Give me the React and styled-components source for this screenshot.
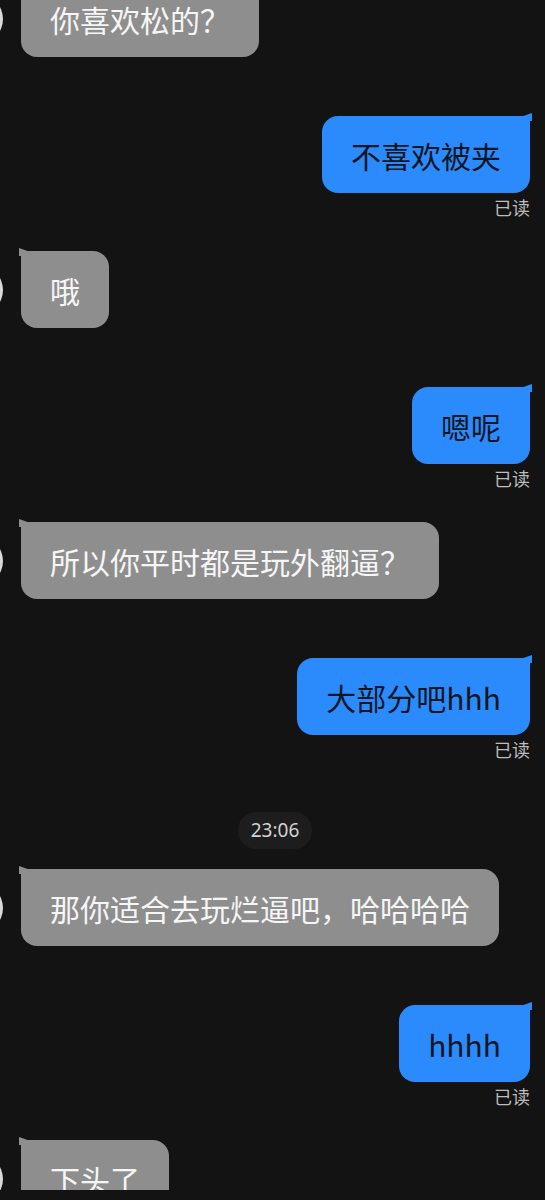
import styled, { createGlobalStyle } from 'styled-components'

const GlobalStyle = createGlobalStyle`
  html, body {
    margin: 0;
    padding: 0;
    background: #131313;
  }
  body {
    font-family: "Noto Sans CJK SC", "Noto Sans", sans-serif;
  }
`

const messages = [
  { from: 'them', text: '你喜欢松的？' },
  { from: 'me', text: '不喜欢被夹', read: true },
  { from: 'them', text: '哦' },
  { from: 'me', text: '嗯呢', read: true },
  { from: 'them', text: '所以你平时都是玩外翻逼？' },
  { from: 'me', text: '大部分吧hhh', read: true },
  { time: '23:06' },
  { from: 'them', text: '那你适合去玩烂逼吧，哈哈哈哈' },
  { from: 'me', text: 'hhhh', read: true },
  { from: 'them', text: '下头了' }
]

const Screen = styled.div`
  width: 545px;
  height: 1200px;
  background: #131313;
  overflow: hidden;
`

const Viewport = styled.div`
  height: 1190px;
  overflow: hidden;
`

const Thread = styled.div`
  display: flex;
  flex-direction: column;
  margin-top: -20px;
  padding: 0 15px 0 0;
`

const Stamp = styled.div`
  align-self: center;
  margin: 52px 0 0 20px;
  height: 37px;
  padding: 0 13px;
  border-radius: 18px;
  background: #1d1d1d;
  color: #d2d2d2;
  font-family: "Noto Sans", "Liberation Sans", sans-serif;
  font-size: 19px;
  line-height: 37px;
`

const Incoming = styled.div`
  display: flex;
  align-items: center;
  gap: 18px;
  margin-top: 33px;

  &:first-child {
    margin-top: 0;
  }

  ${Stamp} + & {
    margin-top: 20px;
  }
`

const Outgoing = styled.div`
  display: flex;
  flex-direction: column;
  align-items: flex-end;
  margin-top: 59px;
`

const Avatar = styled.div`
  width: 50px;
  height: 50px;
  margin-left: -47px;
  flex-shrink: 0;
  border-radius: 50%;
  background: #dadada;
`

const Bubble = styled.div`
  position: relative;
  padding: 20px 29px 18px;
  font-size: 30px;
  line-height: 39px;
  white-space: nowrap;
  background: ${p => (p.$mine ? '#2b8bfd' : '#8e8e8e')};
  color: ${p => (p.$mine ? '#0f1622' : '#f6f6f6')};
  border-radius: ${p => (p.$mine ? '16px 3px 16px 16px' : '3px 16px 16px 16px')};

  /* little horn on the top corner */
  &::before {
    content: '';
    position: absolute;
    top: -3px;
    ${p => (p.$mine ? 'right: -2px;' : 'left: -2px;')}
    width: 13px;
    height: 8px;
    background: inherit;
    clip-path: ${p =>
      p.$mine
        ? 'polygon(100% 0, 0 55%, 0 100%, 100% 100%)'
        : 'polygon(0 0, 100% 55%, 100% 100%, 0 100%)'};
  }
`

const Receipt = styled.div`
  margin-top: 3px;
  color: #bdbdbd;
  font-size: 18px;
  line-height: 22px;
`

export default function App() {
  return (
    <Screen>
      <GlobalStyle />
      <Viewport>
        <Thread>
          {messages.map((m, i) => {
            if (m.time) return <Stamp key={i}>{m.time}</Stamp>
            if (m.from === 'me') {
              return (
                <Outgoing key={i}>
                  <Bubble $mine>{m.text}</Bubble>
                  {m.read && <Receipt>已读</Receipt>}
                </Outgoing>
              )
            }
            return (
              <Incoming key={i}>
                <Avatar />
                <Bubble>{m.text}</Bubble>
              </Incoming>
            )
          })}
        </Thread>
      </Viewport>
    </Screen>
  )
}
